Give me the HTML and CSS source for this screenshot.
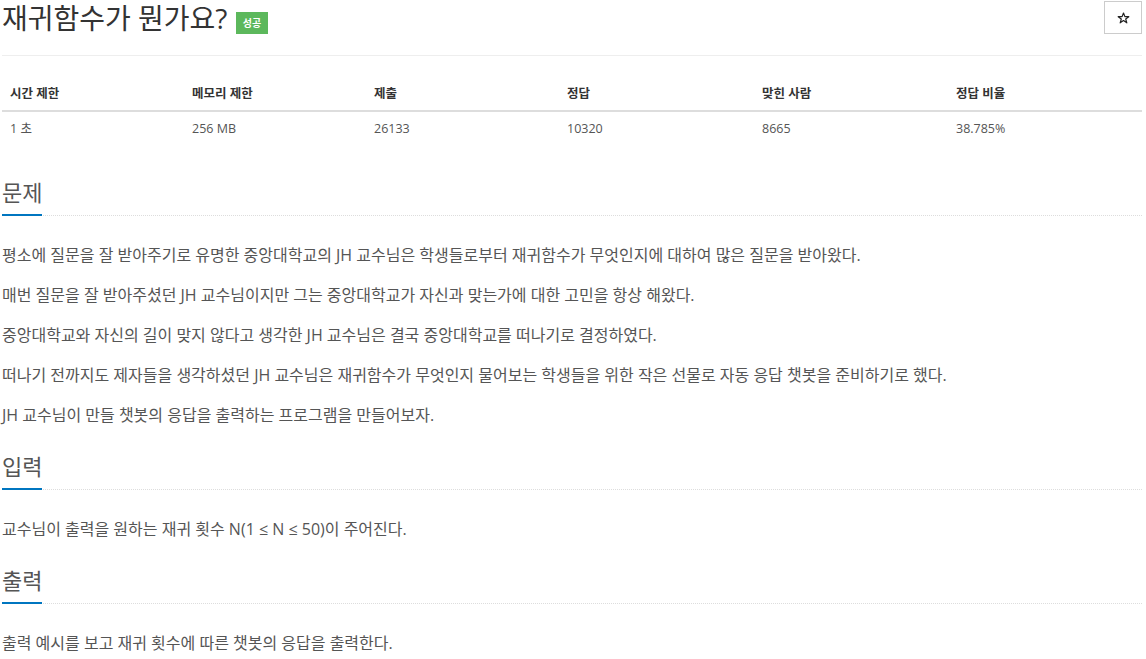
FILE: index.html
```html
<!DOCTYPE html>
<html lang="ko">
<head>
    <meta charset="utf-8"/>
    <title>재귀함수가 뭔가요?</title>
    <link rel="stylesheet" href="styles.css">
</head>
<body>
<div class="page">
    <div class="page-header">
        <h1 class="problem-title">재귀함수가 뭔가요? <span class="label-success">성공</span></h1>
        <button class="star-btn" type="button">
            <svg width="13" height="12" viewBox="0 0 13 12"><path d="M6.5 1 L7.9 4.6 L11.8 4.7 L8.7 7 L9.8 10.8 L6.5 8.6 L3.2 10.8 L4.3 7 L1.2 4.7 L5.1 4.6 Z" fill="none" stroke="#222" stroke-width="1.2" stroke-linejoin="round"/></svg>
        </button>
    </div>

    <table class="problem-info">
        <thead>
            <tr>
                <th class="c1">시간 제한</th>
                <th class="c2">메모리 제한</th>
                <th class="c3">제출</th>
                <th class="c4">정답</th>
                <th class="c5">맞힌 사람</th>
                <th>정답 비율</th>
            </tr>
        </thead>
        <tbody>
            <tr>
                <td>1 초</td>
                <td>256 MB</td>
                <td>26133</td>
                <td>10320</td>
                <td>8665</td>
                <td>38.785%</td>
            </tr>
        </tbody>
    </table>

    <section class="problem-section">
        <div class="headline"><h2>문제</h2></div>
        <div class="problem-text">
            <p>평소에 질문을 잘 받아주기로 유명한 중앙대학교의 JH 교수님은 학생들로부터 재귀함수가 무엇인지에 대하여 많은 질문을 받아왔다.</p>
            <p>매번 질문을 잘 받아주셨던 JH 교수님이지만 그는 중앙대학교가 자신과 맞는가에 대한 고민을 항상 해왔다.</p>
            <p>중앙대학교와 자신의 길이 맞지 않다고 생각한 JH 교수님은 결국 중앙대학교를 떠나기로 결정하였다.</p>
            <p>떠나기 전까지도 제자들을 생각하셨던 JH 교수님은 재귀함수가 무엇인지 물어보는 학생들을 위한 작은 선물로 자동 응답 챗봇을 준비하기로 했다.</p>
            <p>JH 교수님이 만들 챗봇의 응답을 출력하는 프로그램을 만들어보자.</p>
        </div>
    </section>

    <section class="problem-section">
        <div class="headline"><h2>입력</h2></div>
        <div class="problem-text">
            <p>교수님이 출력을 원하는 재귀 횟수 N(1 ≤ N ≤ 50)이 주어진다.</p>
        </div>
    </section>

    <section class="problem-section">
        <div class="headline"><h2>출력</h2></div>
        <div class="problem-text">
            <p>출력 예시를 보고 재귀 횟수에 따른 챗봇의 응답을 출력한다.</p>
        </div>
    </section>
</div>
</body>
</html>
```

FILE: styles.css
```css
body {
    margin: 0;
    font-family: "Open Sans", "Noto Sans CJK KR", sans-serif;
    font-size: 14px;
    color: #555;
    background: #fff;
}
.page {
    padding: 0 4px 0 2px;
}
.page-header {
    display: flex;
    justify-content: space-between;
    align-items: flex-start;
    height: 55px;
    border-bottom: 1px solid #eee;
}
.problem-title {
    margin: 0;
    padding-top: 1px;
    font-size: 28px;
    font-weight: normal;
    line-height: 34px;
    color: #333;
}
.label-success {
    display: inline-block;
    vertical-align: 2px;
    margin-left: 1px;
    padding: 0 7px;
    height: 22px;
    line-height: 22px;
    font-size: 10px;
    font-weight: bold;
    color: #fff;
    background: #5cb85c;
}
.star-btn {
    display: flex;
    align-items: center;
    justify-content: center;
    width: 38px;
    height: 33px;
    margin-top: 1px;
    padding: 0;
    border: 1px solid #ccc;
    background: #fff;
}
.problem-info {
    width: 100%;
    margin-top: 18px;
    border-collapse: collapse;
}
.problem-info th,
.problem-info td {
    padding: 8px;
    text-align: left;
}
.problem-info th {
    padding-top: 10px;
    padding-bottom: 6px;
    font-size: 12.5px;
    font-weight: bold;
    line-height: 20px;
    color: #333;
    border-bottom: 2px solid #ddd;
}
.problem-info td {
    font-size: 12.5px;
    color: #555;
    line-height: 18px;
}
.problem-info .c1 { width: 166px; }
.problem-info .c2 { width: 166px; }
.problem-info .c3 { width: 177px; }
.problem-info .c4 { width: 179px; }
.problem-info .c5 { width: 178px; }
.problem-section {
    margin-top: 34px;
}
.problem-section + .problem-section {
    margin-top: 27px;
}
.headline {
    border-bottom: 1px dotted #ddd;
}
.headline h2 {
    display: inline-block;
    margin: 0 0 -1px;
    padding-bottom: 10px;
    font-size: 22px;
    font-weight: normal;
    line-height: 24px;
    color: #555;
    border-bottom: 2px solid #0076c0;
}
.problem-text {
    padding-top: 27px;
}
.problem-text p {
    margin: 0 0 16px;
    font-size: 16px;
    line-height: 24px;
}
```
